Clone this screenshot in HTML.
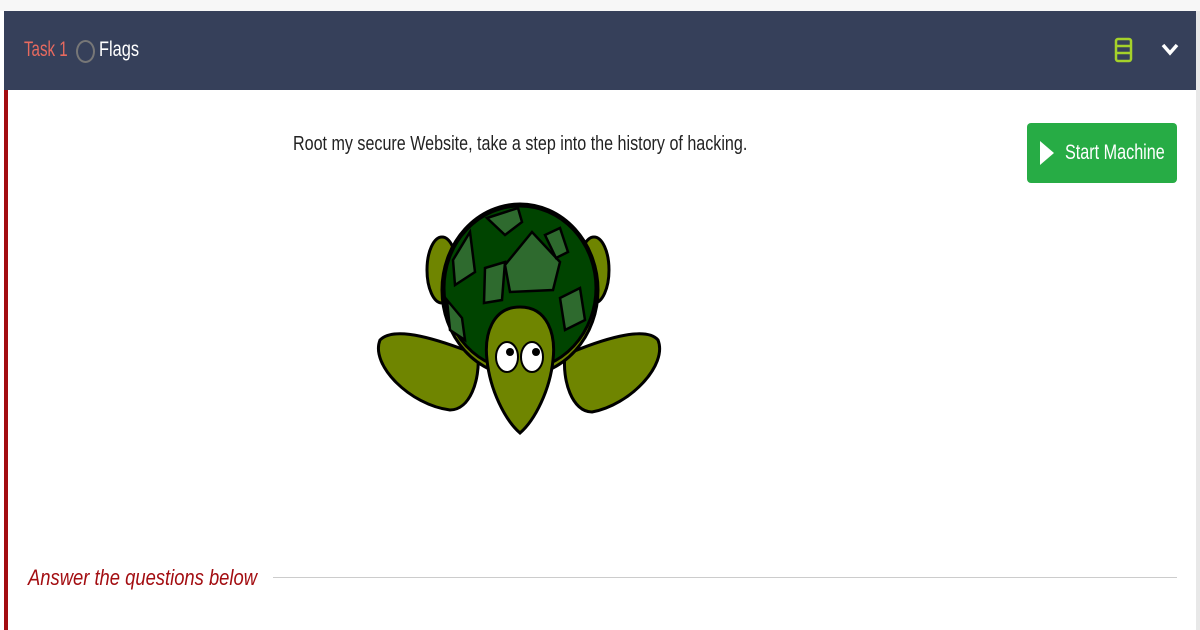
<!DOCTYPE html>
<html><head><style>
body{margin:0;width:1200px;height:630px;background:#fff;font-family:"Liberation Sans",sans-serif;overflow:hidden;position:relative}
.top{position:absolute;left:0;top:0;width:1200px;height:11px;background:#f7f7f7}
.hdr{position:absolute;left:4px;top:11px;width:1192px;height:79px;background:#36405a}
.rb{position:absolute;left:1196px;top:11px;width:4px;height:619px;background:#e8e8e8}
.lb{position:absolute;left:4px;top:90px;width:4px;height:540px;background:#a30d11}
.s{position:absolute;white-space:nowrap;transform-origin:0 0}
.t{top:38px;font-size:21px}
.desc{left:293px;top:133px;font-size:20px;color:#222;transform:scaleX(0.805)}
.btn{position:absolute;left:1027px;top:123px;width:150px;height:60px;background:#27ac45;border-radius:4px;color:#fff}
.ans{left:28px;top:565px;font-size:22px;font-style:italic;color:#a30d11;transform:scaleX(0.836)}
.line{position:absolute;left:273px;top:577px;width:904px;height:1px;background:#ccc}
</style></head><body>
<div class="top"></div><div class="hdr"></div><div class="rb"></div><div class="lb"></div>
<div class="s t" style="left:24px;color:#e86a5f;transform:scaleX(0.72)">Task 1</div>
<div style="position:absolute;left:76px;top:40px;width:15px;height:19px;border:2px solid #777;border-radius:50%"></div>
<div class="s t" style="left:99px;color:#fff;transform:scaleX(0.78)">Flags</div>
<svg style="position:absolute;left:1112px;top:36px" width="24" height="28"><g fill="none" stroke="#a5d22a" stroke-width="2.5"><rect x="4" y="3" width="15" height="22" rx="2"/><line x1="4" y1="10" x2="19" y2="10"/><line x1="4" y1="17" x2="19" y2="17"/></g></svg>
<svg style="position:absolute;left:1161px;top:42px" width="18" height="14"><path d="M2 3 L9 11 L16 3" fill="none" stroke="#fff" stroke-width="3.5"/></svg>
<div class="s desc">Root my secure Website, take a step into the history of hacking.</div>
<div class="btn"><svg style="position:absolute;left:12px;top:17px" width="16" height="26"><path d="M1 1 L15 13 L1 25Z" fill="#fff"/></svg><span class="s" style="left:38px;top:18px;font-size:21px;transform:scaleX(0.77)">Start Machine</span></div>
<svg style="position:absolute;left:0;top:0" width="1200" height="630">
<g stroke="#000" stroke-width="3">
<ellipse cx="442" cy="270" rx="15" ry="33" fill="#6f8500"/>
<ellipse cx="594" cy="270" rx="15" ry="33" fill="#6f8500"/>
<path d="M380 340 C395 325 440 340 478 355 C480 380 470 410 450 410 C410 405 370 365 380 340Z" fill="#6f8500"/>
<path d="M658 340 C645 325 600 340 565 355 C562 380 572 412 592 412 C630 405 668 365 658 340Z" fill="#6f8500"/>
<ellipse cx="520" cy="290" rx="78" ry="86" fill="#6f8500"/>
<ellipse cx="520" cy="288" rx="76" ry="82" fill="#004400"/>
</g>
<g fill="#2e6a2e" stroke="#000" stroke-width="2.5">
<path d="M487 218 L518 208 L522 222 L505 235Z"/>
<path d="M505 265 L532 232 L560 262 L553 290 L510 292Z"/>
<path d="M545 235 L560 228 L568 252 L556 258Z"/>
<path d="M453 260 L470 232 L475 272 L455 285Z"/>
<path d="M485 268 L505 262 L502 300 L484 303Z"/>
<path d="M560 298 L580 288 L585 320 L565 330Z"/>
<path d="M447 300 L462 318 L465 340 L450 330Z"/>
</g>
<path d="M520 307 C548 307 556 335 553 360 C550 390 535 420 520 433 C505 420 490 390 487 360 C484 335 492 307 520 307Z" fill="#6f8500" stroke="#000" stroke-width="3"/>
<g stroke="#000" stroke-width="2" fill="#fff"><ellipse cx="507" cy="357" rx="11" ry="15"/><ellipse cx="532" cy="357" rx="11" ry="15"/></g>
<circle cx="510" cy="352" r="4"/><circle cx="536" cy="352" r="4"/>
</svg>
<div class="s ans">Answer the questions below</div><div class="line"></div>
</body></html>
